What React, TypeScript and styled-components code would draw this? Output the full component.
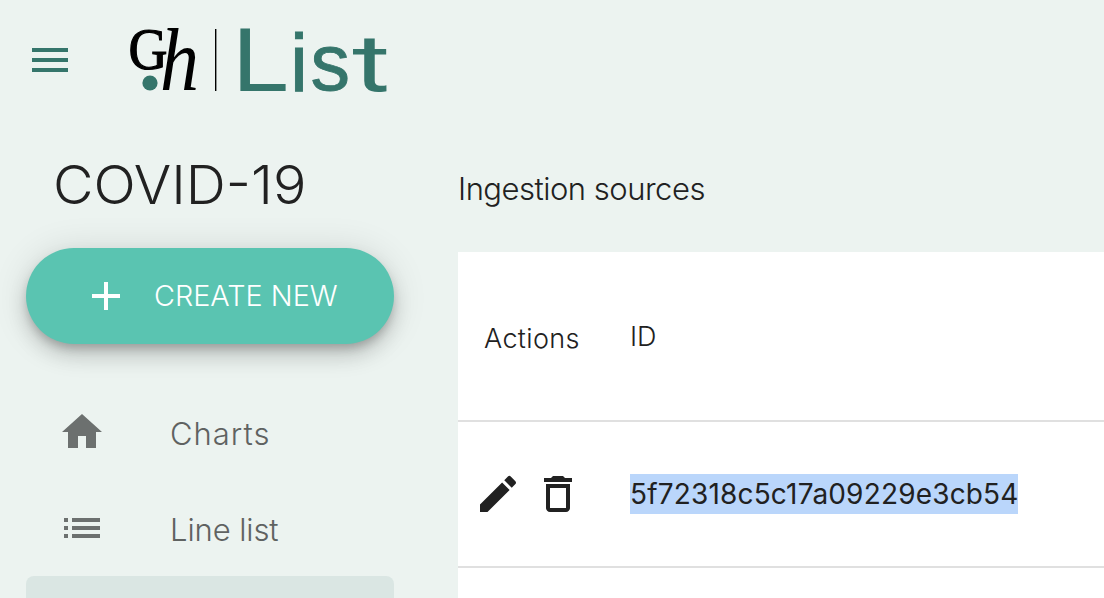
import React from "react";
import styled, { createGlobalStyle } from "styled-components";

const GlobalStyle = createGlobalStyle`
  * { box-sizing: border-box; }
  body {
    margin: 0;
    background: #ecf3f0;
    color: #212121;
    font-family: Inter, "Liberation Sans", sans-serif;
    font-weight: 300;
    overflow: hidden;
  }
  ::selection { background: #bad6fb; }
`;

const Page = styled.div`
  height: 598px;
  overflow: hidden;
  display: flex;
  flex-direction: column;
`;

const TopBar = styled.header`
  height: 120px;
  flex: none;
  display: flex;
  align-items: center;
  padding-left: 26px;
  gap: 46px;
  color: #35756b;
`;

const LogoDrawing = styled.svg`
  display: block;
  overflow: visible;
`;

const Columns = styled.div`
  flex: 1;
  min-height: 0;
  display: flex;
`;

const Sidebar = styled.aside`
  width: 458px;
  flex: none;
  padding: 32px 64px 0 26px;
`;

const Label = styled.span<{ $size: number; $spacing?: number; $stretch?: number }>`
  display: block;
  font-size: ${(p) => p.$size}px;
  letter-spacing: ${(p) => p.$spacing ?? 0}px;
  white-space: nowrap;
  transform: ${(p) => (p.$stretch ? `scaleX(${p.$stretch})` : "none")};
  transform-origin: left center;
`;

const Disease = styled.h1`
  margin: 0 0 31px;
  padding-left: 27px;
  font-weight: 300;
  line-height: 65px;
`;

const CreateButton = styled.button`
  width: 368px;
  height: 96px;
  border: 0;
  border-radius: 48px;
  padding: 0 0 0 56px;
  display: flex;
  align-items: center;
  gap: 24px;
  font: inherit;
  color: #fff;
  background: #5ac4b1;
  box-shadow: 0 6px 10px -2px rgba(0, 0, 0, 0.2), 0 12px 20px rgba(0, 0, 0, 0.14),
    0 2px 36px rgba(0, 0, 0, 0.12);
`;

const Nav = styled.nav`
  margin-top: 40px;
`;

const NavItem = styled.a<{ $selected?: boolean }>`
  height: 96px;
  padding: 0 32px;
  display: flex;
  align-items: center;
  gap: 64px;
  border-radius: 8px;
  color: #5f6261;
  background: ${(p) => (p.$selected ? "#dae6e3" : "transparent")};
`;

const NavIcon = styled.span`
  display: flex;
  color: #6c706f;
`;

const NavText = styled.span`
  padding-top: 2px;
`;

const Main = styled.main`
  flex: 1;
  min-width: 0;
`;

const Title = styled.h2`
  height: 132px;
  margin: 0;
  padding-top: 49px;
  line-height: 40px;
  font-weight: 300;
`;

const Table = styled.section`
  background: #fff;
  height: 400px;
`;

const Row = styled.div<{ $height: number }>`
  height: ${(p) => p.$height}px;
  border-bottom: 2px solid #e0e0e0;
  display: grid;
  grid-template-columns: 172px 1fr;
  align-items: center;
`;

const HeadCell = styled.div<{ $left?: number; $top?: number }>`
  padding: ${(p) => p.$top ?? 0}px 0 0 ${(p) => p.$left ?? 0}px;
`;

const Actions = styled.div`
  display: flex;
  gap: 12px;
  padding-left: 16px;
`;

const Selected = styled.span`
  display: block;
  width: 388px;
  height: 40px;
  line-height: 40px;
  background: #bad6fb;
  font-weight: 370;
`;

const icons = {
  menu: "M3 18h18v-2H3v2zm0-5h18v-2H3v2zm0-7v2h18V6H3z",
  plus: "M19 13h-6v6h-2v-6H5v-2h6V5h2v6h6v2z",
  home: "M10 20v-6h4v6h5v-8h3L12 3 2 12h3v8z",
  list: "M3 13h2v-2H3v2zm0 4h2v-2H3v2zm0-8h2V7H3v2zm4 4h14v-2H7v2zm0 4h14v-2H7v2zM7 7v2h14V7H7z",
  edit: "M3 17.25V21h3.75L17.81 9.94l-3.75-3.75L3 17.25zM20.71 7.04c.39-.39.39-1.02 0-1.41l-2.34-2.34a.9959.9959 0 0 0-1.41 0l-1.83 1.83 3.75 3.75 1.83-1.83z",
  trash:
    "M6 19c0 1.1.9 2 2 2h8c1.1 0 2-.9 2-2V7H6v12zM8 9h8v10H8V9zm7.5-5l-1-1h-5l-1 1H5v2h14V4z",
};

const Icon = ({ name }: { name: keyof typeof icons }) => (
  <svg width="48" height="48" viewBox="0 0 24 24" fill="currentColor" display="block">
    <path d={icons[name]} />
  </svg>
);

const Logo = () => (
  <LogoDrawing width="280" height="84" viewBox="120 18 280 84">
    <g fill="#000" stroke="#000" fontFamily="Liberation Serif, serif">
      <text x="128.5" y="68.8" fontSize="60" strokeWidth="1.2" textLength="39" lengthAdjust="spacingAndGlyphs">G</text>
      <text x="160" y="90" fontSize="89" strokeWidth="0" fontStyle="italic" textLength="39" lengthAdjust="spacingAndGlyphs">h</text>
    </g>
    <circle cx="150" cy="83" r="7.6" fill="#35756b" />
    <rect x="215" y="29" width="1.4" height="62" fill="#000" />
    <text y="90.5" fontFamily="Liberation Sans, sans-serif" fontSize="79" fontWeight="400" fill="#35756b" stroke="#35756b">
      <tspan x="232" fontSize="90" strokeWidth="0" textLength="57" lengthAdjust="spacingAndGlyphs">L</tspan>
      <tspan x="290" fontSize="81" strokeWidth="0.9">i</tspan>
      <tspan x="310.5" y="90" strokeWidth="0.9">s</tspan>
      <tspan x="352.5" y="90.5" fontSize="80.5" strokeWidth="0" fontFamily="Roboto" fontWeight="400" textLength="38" lengthAdjust="spacingAndGlyphs">t</tspan>
    </text>
  </LogoDrawing>
);

export default function App() {
  return (
    <Page>
      <GlobalStyle />
      <TopBar>
        <Icon name="menu" />
        <Logo />
      </TopBar>
      <Columns>
        <Sidebar>
          <Disease><Label $size={54} $stretch={1.03}>COVID-19</Label></Disease>
          <CreateButton>
            <Icon name="plus" />
            <Label $size={28} $stretch={1.028}>CREATE NEW</Label>
          </CreateButton>
          <Nav>
            <NavItem>
              <NavIcon><Icon name="home" /></NavIcon>
              <NavText><Label $size={31} $spacing={1}>Charts</Label></NavText>
            </NavItem>
            <NavItem>
              <NavIcon><Icon name="list" /></NavIcon>
              <NavText><Label $size={31} $spacing={-0.1}>Line list</Label></NavText>
            </NavItem>
            <NavItem $selected />
          </Nav>
        </Sidebar>
        <Main>
          <Title><Label $size={31} $spacing={-0.5}>Ingestion sources</Label></Title>
          <Table>
            <Row $height={170}>
              <HeadCell $left={26} $top={5}><Label $size={27} $spacing={0.35}>Actions</Label></HeadCell>
              <HeadCell><Label $size={27}>ID</Label></HeadCell>
            </Row>
            <Row $height={146}>
              <Actions>
                <Icon name="edit" />
                <Icon name="trash" />
              </Actions>
              <Selected><Label $size={28} $spacing={0.17}>5f72318c5c17a09229e3cb54</Label></Selected>
            </Row>
          </Table>
        </Main>
      </Columns>
    </Page>
  );
}
